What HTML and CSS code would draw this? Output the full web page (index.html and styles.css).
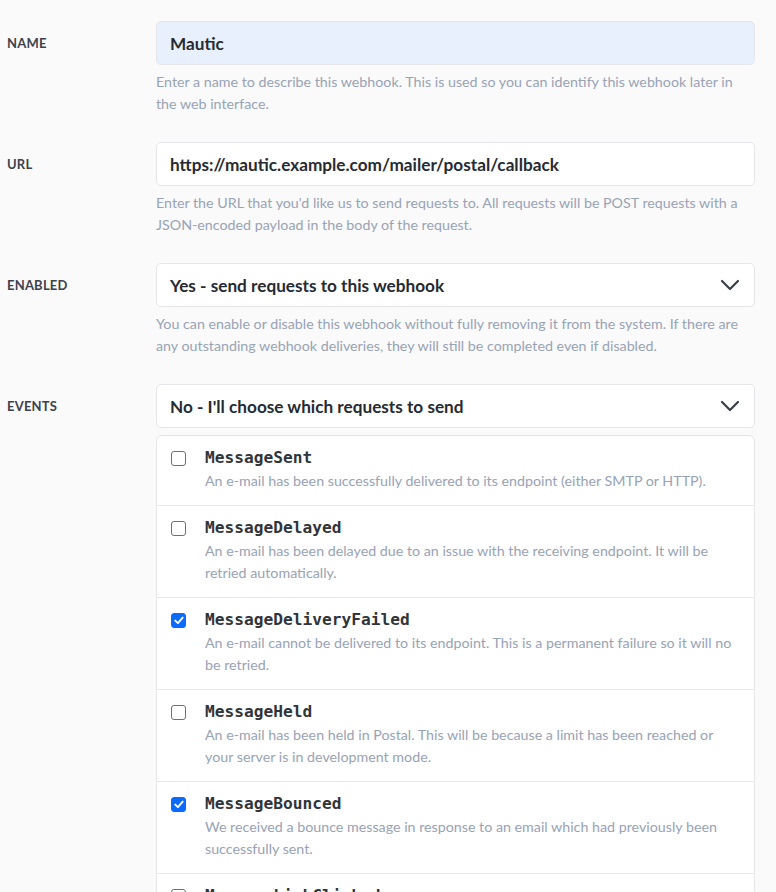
FILE: index.html
```html
<!DOCTYPE html>
<html lang="en">
<head>
<meta charset="utf-8">
<title>Webhook</title>
<link rel="stylesheet" href="styles.css">
</head>
<body>
<form class="form">
  <div class="row">
    <div class="label">Name</div>
    <div class="field">
      <div class="input input--filled">Mautic</div>
      <p class="help">Enter a name to describe this webhook. This is used so you can identify this webhook later in the web interface.</p>
    </div>
  </div>
  <div class="row">
    <div class="label">URL</div>
    <div class="field">
      <div class="input">https://mautic.example.com/mailer/postal/callback</div>
      <p class="help">Enter the URL that you'd like us to send requests to. All requests will be POST requests with a JSON-encoded payload in the body of the request.</p>
    </div>
  </div>
  <div class="row">
    <div class="label">Enabled</div>
    <div class="field">
      <div class="input select">Yes - send requests to this webhook
        <svg class="chev" width="20" height="12" viewBox="0 0 20 12"><path d="M2 2 L10 10 L18 2" fill="none" stroke="#3a3f48" stroke-width="2.2" stroke-linecap="round" stroke-linejoin="round"/></svg>
      </div>
      <p class="help">You can enable or disable this webhook without fully removing it from the system. If there are any outstanding webhook deliveries, they will still be completed even if disabled.</p>
    </div>
  </div>
  <div class="row">
    <div class="label">Events</div>
    <div class="field">
      <div class="input select">No - I'll choose which requests to send
        <svg class="chev" width="20" height="12" viewBox="0 0 20 12"><path d="M2 2 L10 10 L18 2" fill="none" stroke="#3a3f48" stroke-width="2.2" stroke-linecap="round" stroke-linejoin="round"/></svg>
      </div>
      <div class="events">
        <div class="event">
          <span class="cb"></span>
          <div class="event-body">
            <div class="event-name">MessageSent</div>
            <div class="event-desc">An e-mail has been successfully delivered to its endpoint (either SMTP or HTTP).</div>
          </div>
        </div>
        <div class="event">
          <span class="cb"></span>
          <div class="event-body">
            <div class="event-name">MessageDelayed</div>
            <div class="event-desc">An e-mail has been delayed due to an issue with the receiving endpoint. It will be retried automatically.</div>
          </div>
        </div>
        <div class="event">
          <span class="cb cb--on"><svg width="10" height="9" viewBox="0 0 10 9"><path d="M1.3 4.6 L3.9 7.1 L8.7 1.6" fill="none" stroke="#fff" stroke-width="1.9" stroke-linecap="round" stroke-linejoin="round"/></svg></span>
          <div class="event-body">
            <div class="event-name">MessageDeliveryFailed</div>
            <div class="event-desc">An e-mail cannot be delivered to its endpoint. This is a permanent failure so it will no be retried.</div>
          </div>
        </div>
        <div class="event">
          <span class="cb"></span>
          <div class="event-body">
            <div class="event-name">MessageHeld</div>
            <div class="event-desc">An e-mail has been held in Postal. This will be because a limit has been reached or your server is in development mode.</div>
          </div>
        </div>
        <div class="event">
          <span class="cb cb--on"><svg width="10" height="9" viewBox="0 0 10 9"><path d="M1.3 4.6 L3.9 7.1 L8.7 1.6" fill="none" stroke="#fff" stroke-width="1.9" stroke-linecap="round" stroke-linejoin="round"/></svg></span>
          <div class="event-body">
            <div class="event-name">MessageBounced</div>
            <div class="event-desc">We received a bounce message in response to an email which had previously been successfully sent.</div>
          </div>
        </div>
        <div class="event">
          <span class="cb"></span>
          <div class="event-body">
            <div class="event-name">MessageLinkClicked</div>
            <div class="event-desc">A link in one of your outgoing e-mails has been clicked by a recipient.</div>
          </div>
        </div>
      </div>
    </div>
  </div>
</form>
</body>
</html>
```

FILE: styles.css
```css
html, body {
  margin: 0;
  padding: 0;
  background: #fafafa;
}
body {
  font-family: Lato, "Noto Sans", sans-serif;
  color: #2b303a;
  overflow: hidden;
}
.form {
  padding: 21px 21px 0 7px;
}
.row {
  display: grid;
  grid-template-columns: 149px 1fr;
  margin-bottom: 27px;
}
.label {
  height: 44px;
  display: flex;
  align-items: center;
  font-size: 13px;
  font-weight: 700;
  letter-spacing: 0.2px;
  text-transform: uppercase;
  color: #3d424c;
}
.input {
  box-sizing: border-box;
  height: 44px;
  display: flex;
  align-items: center;
  justify-content: space-between;
  padding: 0 14px 0 13px;
  background: #fff;
  border: 1px solid #e4e6ea;
  border-radius: 5px;
  font-size: 17.2px;
  font-weight: 700;
  color: #262b33;
}
.input--filled {
  background: #e8f0fe;
}
.chev {
  display: block;
}
.help {
  margin: 6px 0 0;
  font-size: 14.25px;
  line-height: 22px;
  color: #98a3b6;
}
.events {
  margin-top: 7px;
  background: #fff;
  border: 1px solid #e4e6ea;
  border-radius: 6px;
  overflow: hidden;
}
.event {
  display: flex;
  align-items: flex-start;
  padding: 10px 16px 13px 14px;
  border-top: 1px solid #e6e8ec;
}
.event:first-child {
  border-top: 0;
}
.cb {
  box-sizing: border-box;
  flex: none;
  width: 15px;
  height: 15px;
  margin-top: 5px;
  margin-right: 19px;
  border: 1.5px solid #6e7074;
  border-radius: 3px;
  background: #fff;
  display: flex;
  align-items: center;
  justify-content: center;
}
.cb--on {
  background: #0b6bfd;
  border-color: #0b6bfd;
}
.event-name {
  font-family: "DejaVu Sans Mono", "Liberation Mono", monospace;
  font-size: 16.2px;
  font-weight: 700;
  line-height: 24px;
  color: #30343b;
}
.event-desc {
  font-size: 14.25px;
  line-height: 22px;
  color: #98a3b6;
}
```
